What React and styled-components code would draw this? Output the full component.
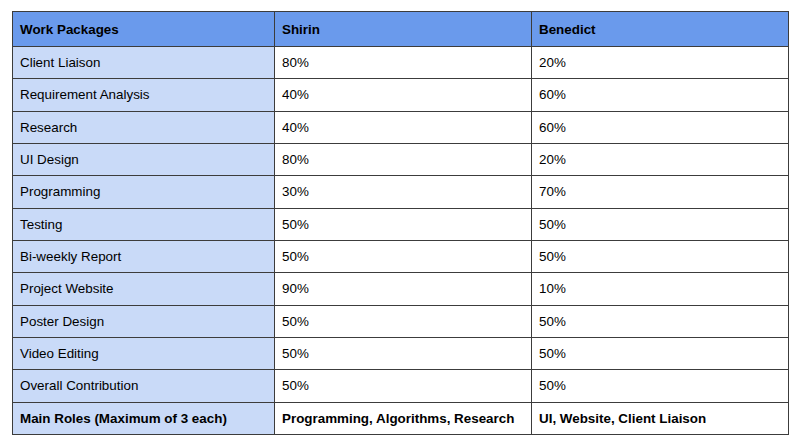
import React from "react";
import styled, { createGlobalStyle } from "styled-components";

const Global = createGlobalStyle`
  html, body { margin: 0; padding: 0; background: #fff; }
  body { font-family: "Liberation Sans", Arial, sans-serif; color: #000; }
`;

const Page = styled.div`
  padding: 11px 12px 0 12px;
`;

const Table = styled.table`
  border-collapse: collapse;
  table-layout: fixed;
  width: 776px;
  font-size: 13.4px;
  font-family: "Liberation Sans", Arial, sans-serif;
`;

const Row = styled.tr`
  height: ${(p) => (p.$head ? "35px" : "32.33px")};
`;

const Cell = styled.td`
  border: 1px solid #3c3c3c;
  padding: 0 7px;
  vertical-align: middle;
  text-align: left;
  font-weight: ${(p) => (p.$bold ? 700 : 400)};
  background: ${(p) => (p.$head ? "#6a9aec" : p.$side ? "#c9daf8" : "#ffffff")};
  white-space: nowrap;
  overflow: hidden;
`;

const rows = [
  ["Client Liaison", "80%", "20%"],
  ["Requirement Analysis", "40%", "60%"],
  ["Research", "40%", "60%"],
  ["UI Design", "80%", "20%"],
  ["Programming", "30%", "70%"],
  ["Testing", "50%", "50%"],
  ["Bi-weekly Report", "50%", "50%"],
  ["Project Website", "90%", "10%"],
  ["Poster Design", "50%", "50%"],
  ["Video Editing", "50%", "50%"],
  ["Overall Contribution", "50%", "50%"],
];

export default function App() {
  return (
    <Page>
      <Global />
      <Table>
        <colgroup>
          <col style={{ width: "262px" }} />
          <col style={{ width: "257px" }} />
          <col style={{ width: "257px" }} />
        </colgroup>
        <thead>
          <Row $head>
            <Cell as="th" $head $bold>Work Packages</Cell>
            <Cell as="th" $head $bold>Shirin</Cell>
            <Cell as="th" $head $bold>Benedict</Cell>
          </Row>
        </thead>
        <tbody>
          {rows.map(([name, a, b]) => (
            <Row key={name}>
              <Cell $side>{name}</Cell>
              <Cell>{a}</Cell>
              <Cell>{b}</Cell>
            </Row>
          ))}
          <Row>
            <Cell $side $bold>Main Roles (Maximum of 3 each)</Cell>
            <Cell $bold>Programming, Algorithms, Research</Cell>
            <Cell $bold>UI, Website, Client Liaison</Cell>
          </Row>
        </tbody>
      </Table>
    </Page>
  );
}
